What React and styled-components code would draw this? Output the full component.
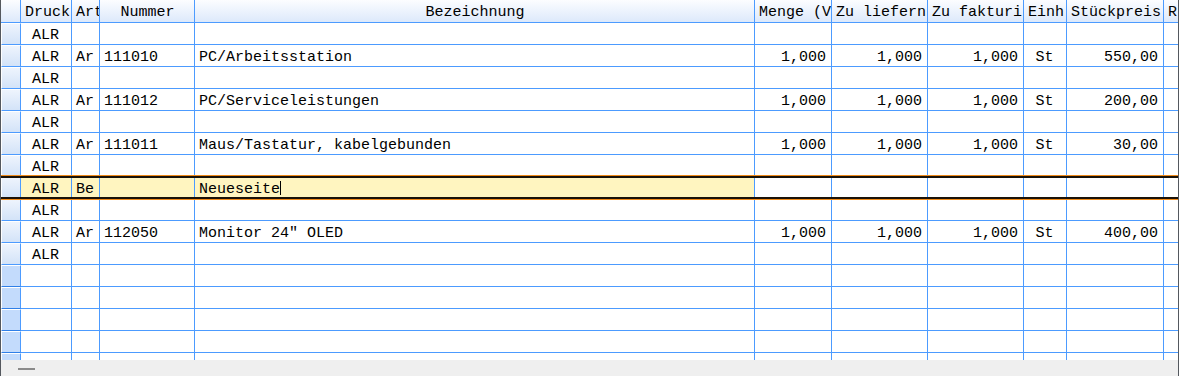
import { createGlobalStyle, styled } from "styled-components"

const GlobalStyle = createGlobalStyle`
  html, body {
    margin: 0;
    padding: 0;
    background: #ffffff;
    overflow: hidden;
  }
`

const GRID = "#4c9bff"
const COLS = "20px 51px 28px 95px 560px 77px 96px 96px 43px 97px 14px"

const columns = [
  { key: "druck", title: "Druck", align: "center" },
  { key: "art", title: "Art", align: "left" },
  { key: "nummer", title: "Nummer", align: "left" },
  { key: "bez", title: "Bezeichnung", align: "left" },
  { key: "menge", title: "Menge (V", align: "right" },
  { key: "liefern", title: "Zu liefern", align: "right" },
  { key: "fakt", title: "Zu fakturi", align: "right" },
  { key: "einh", title: "Einh", align: "center" },
  { key: "preis", title: "Stückpreis", align: "right" },
  { key: "rabatt", title: "R", align: "left" },
]

const item = (art, nummer, bez, preis) => ({
  druck: "ALR",
  art,
  nummer,
  bez,
  menge: "1,000",
  liefern: "1,000",
  fakt: "1,000",
  einh: "St",
  preis,
})

const rows = [
  { druck: "ALR" },
  item("Ar", "111010", "PC/Arbeitsstation", "550,00"),
  { druck: "ALR" },
  item("Ar", "111012", "PC/Serviceleistungen", "200,00"),
  { druck: "ALR" },
  item("Ar", "111011", "Maus/Tastatur, kabelgebunden", "30,00"),
  { druck: "ALR" },
  { druck: "ALR", art: "Be", bez: "Neueseite", selected: true },
  { druck: "ALR" },
  item("Ar", "112050", 'Monitor 24" OLED', "400,00"),
  { druck: "ALR" },
  { empty: true },
  { empty: true },
  { empty: true },
  { empty: true },
  { empty: true },
]

const Frame = styled.div`
  width: 1179px;
  height: 376px;
  box-sizing: border-box;
  border-left: 1px solid #54585e;
  border-right: 1px solid #54585e;
  display: flex;
  flex-direction: column;
  font-family: "Liberation Mono", "Courier New", monospace;
  font-size: 15px;
  color: #000;
`

const Grid = styled.div`
  height: 360px;
  overflow: hidden;
  display: flex;
  flex-direction: column;
`

const HeaderRow = styled.div`
  display: grid;
  grid-template-columns: ${COLS};
  height: 23px;
  flex: none;
  background: linear-gradient(#fcfdff, #dbe8fb);
`

const HeaderCell = styled.div`
  box-sizing: border-box;
  height: 23px;
  border-bottom: 1px solid ${GRID};
  border-right: ${(p) => (p.$last ? "none" : `1px solid ${GRID}`)};
  padding: 0 3px 0 4px;
  line-height: 25px;
  text-align: ${(p) => (p.$left ? "left" : "center")};
  white-space: nowrap;
  overflow: hidden;
`

const Row = styled.div`
  display: grid;
  grid-template-columns: ${COLS};
  height: 22px;
  flex: none;

  ${(p) =>
    p.$selected &&
    `
    position: relative;
    z-index: 1;

    &::after {
      content: "";
      position: absolute;
      left: 0;
      right: 0;
      top: -2px;
      height: 25px;
      box-sizing: border-box;
      border-top: 1px solid #ef8a1a;
      border-bottom: 1px solid #ef8a1a;
      box-shadow: inset 0 2px 0 #1a1208, inset 0 -2px 0 #1a1208;
      pointer-events: none;
    }
  `}
`

const RowHead = styled.div`
  box-sizing: border-box;
  height: 22px;
  border-right: 1px solid ${GRID};
  border-bottom: 1px solid ${(p) => (p.$empty ? "#2f7fe8" : GRID)};
  border-top: 1px solid #ffffff;
  border-left: 1px solid #ffffff;
  background: ${(p) =>
    p.$empty ? "#c3dbfc" : "linear-gradient(#eef4fd, #d3e3f8)"};
`

const Cell = styled.div`
  box-sizing: border-box;
  height: 22px;
  border-bottom: 1px solid ${GRID};
  border-right: ${(p) => (p.$last ? "none" : `1px solid ${GRID}`)};
  padding: 0 5px 0 4px;
  line-height: 25px;
  text-align: ${(p) => p.$align};
  white-space: nowrap;
  overflow: hidden;
  background: ${(p) => (p.$hl ? "#fff5c0" : "#ffffff")};
`

const Caret = styled.span`
  display: inline-block;
  width: 1px;
  height: 14px;
  background: #000;
  vertical-align: -2px;
`

const StatusBar = styled.div`
  height: 16px;
  background: #efefef;
  display: flex;
  align-items: center;
  padding-left: 17px;
`

const Dash = styled.div`
  width: 17px;
  height: 2px;
  background: #8a8a8a;
  margin-top: 1px;
`

export default function App() {
  return (
    <>
      <GlobalStyle />
      <Frame>
        <Grid>
          <HeaderRow>
            <HeaderCell />
            {columns.map((c, i) => (
              <HeaderCell
                key={c.key}
                $last={i === columns.length - 1}
                $left={c.key === "rabatt"}
              >
                {c.title}
              </HeaderCell>
            ))}
          </HeaderRow>
          {rows.map((r, ri) => (
            <Row key={ri} $selected={r.selected}>
              <RowHead $empty={r.empty} />
              {columns.map((c, i) => (
                <Cell
                  key={c.key}
                  $align={c.align}
                  $last={i === columns.length - 1}
                  $hl={r.selected && i < 4}
                >
                  {r[c.key]}
                  {r.selected && c.key === "bez" && <Caret />}
                </Cell>
              ))}
            </Row>
          ))}
        </Grid>
        <StatusBar>
          <Dash />
        </StatusBar>
      </Frame>
    </>
  )
}
